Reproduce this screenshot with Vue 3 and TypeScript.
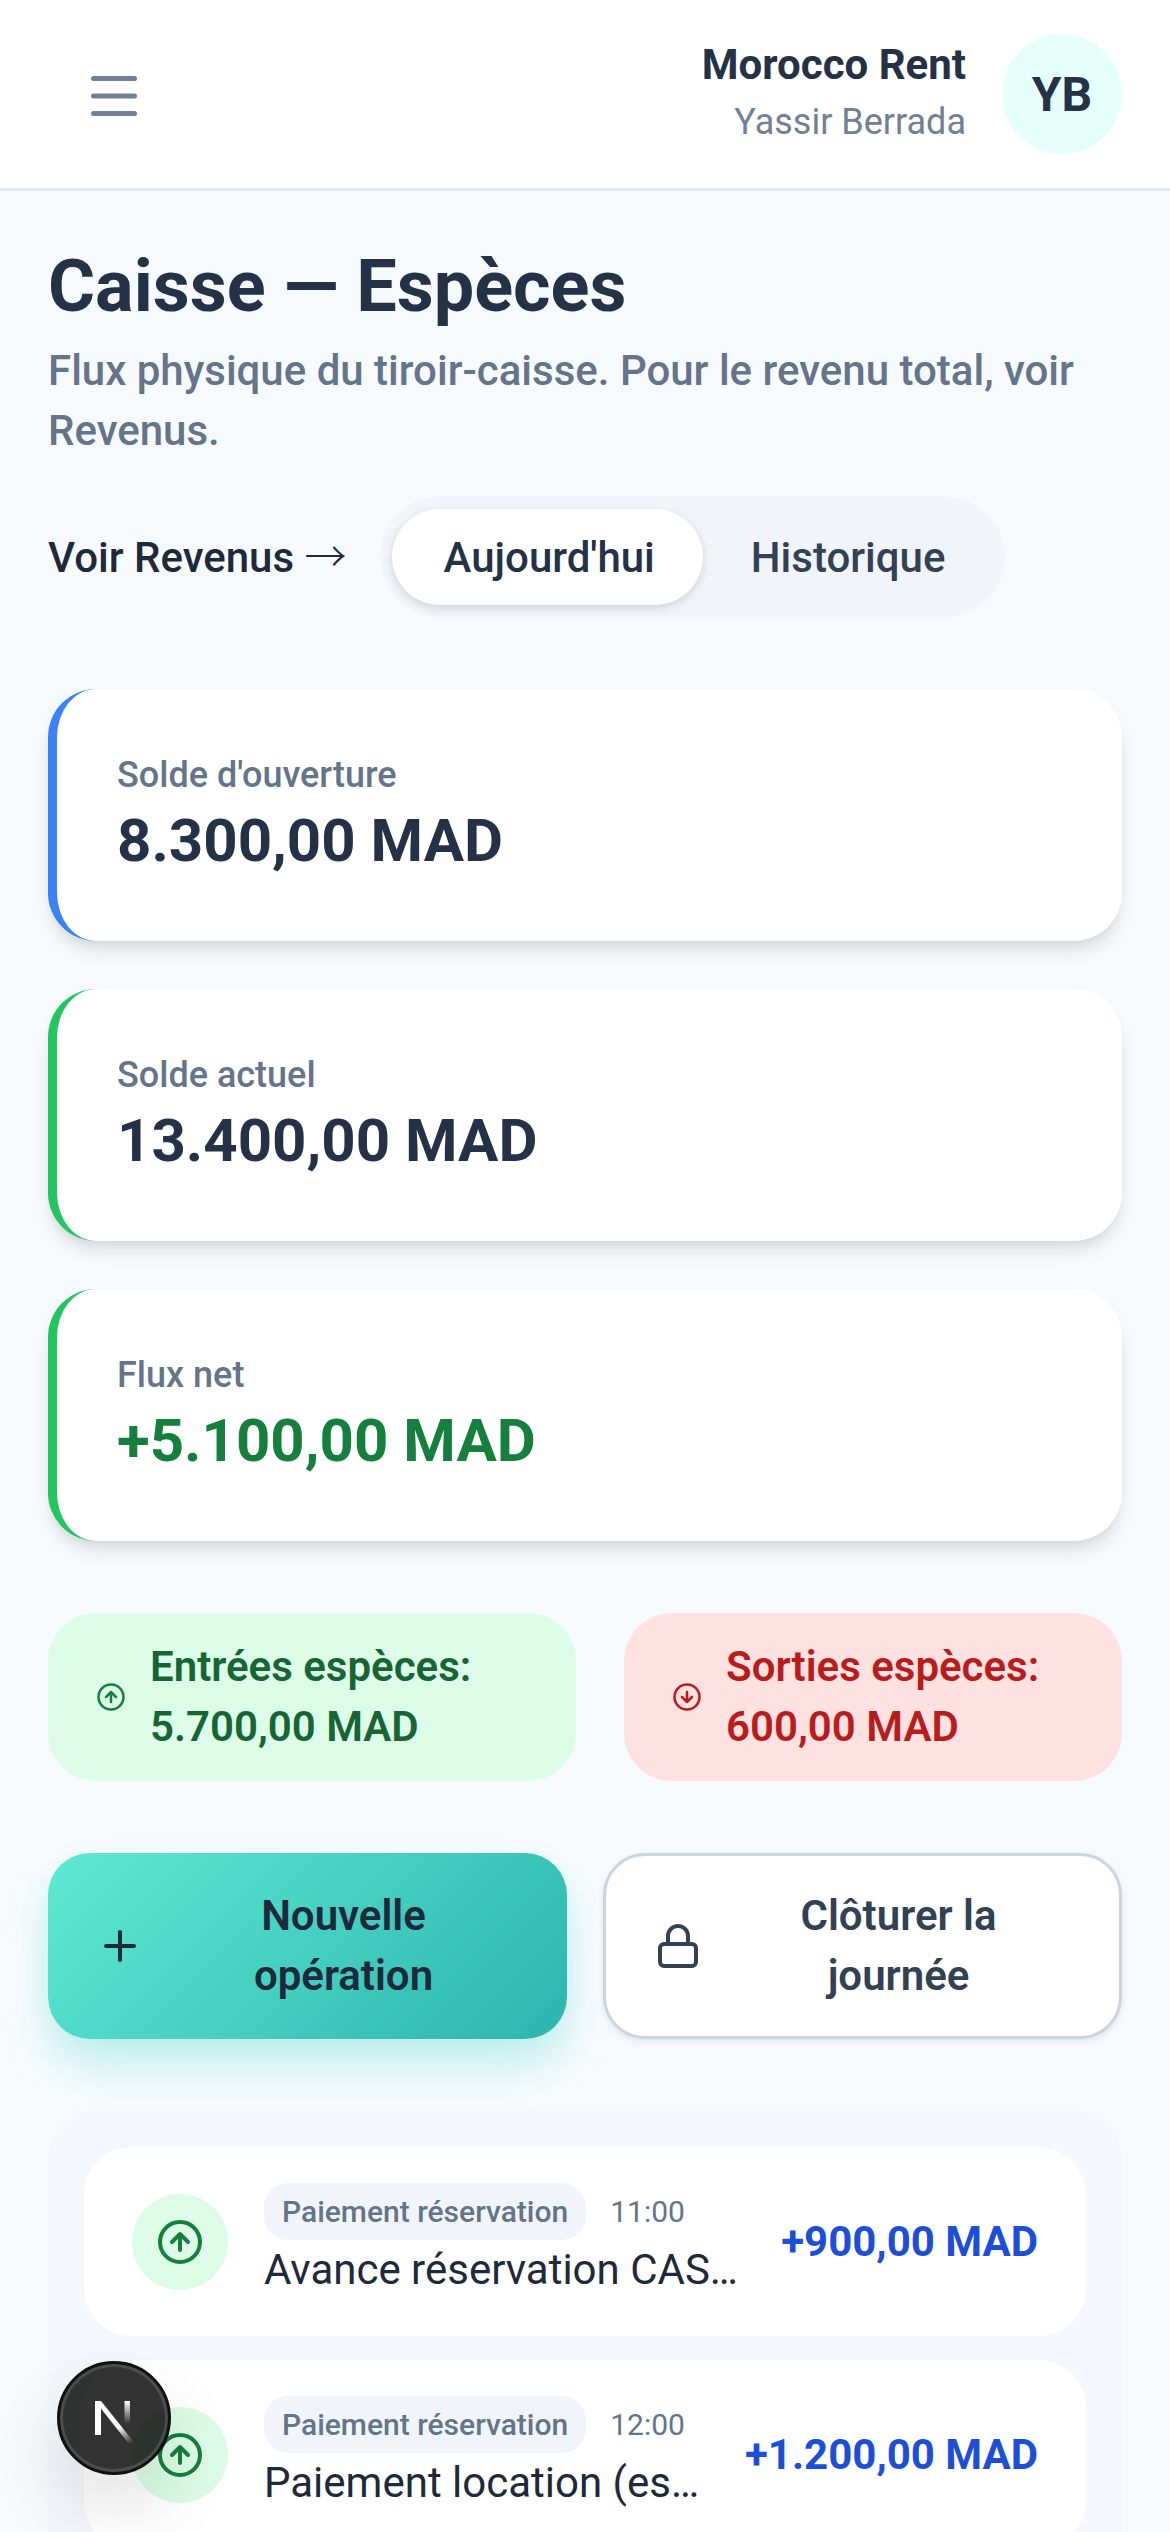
<script setup lang="ts">
interface Op {
  tag: string
  time: string
  title: string
  amount: string
}
const ops: Op[] = [
  { tag: 'Paiement réservation', time: '11:00', title: 'Avance réservation CAS…', amount: '+900,00 MAD' },
  { tag: 'Paiement réservation', time: '12:00', title: 'Paiement location (es…', amount: '+1.200,00 MAD' },
]
</script>

<template>
  <div class="page">
    <header class="topbar">
      <button class="menu" aria-label="Menu">
        <svg viewBox="0 0 46 40" width="46" height="40" fill="none" stroke="#718096" stroke-width="5" stroke-linecap="round">
          <path d="M2.5 2.5h41M2.5 20h41M2.5 37.5h41" />
        </svg>
      </button>
      <div class="account">
        <div class="who">
          <div class="company">Morocco Rent</div>
          <div class="user">Yassir Berrada</div>
        </div>
        <div class="avatar">YB</div>
      </div>
    </header>

    <main class="main">
      <section class="head">
        <h1>Caisse — Espèces</h1>
        <p class="sub">Flux physique du tiroir-caisse. Pour le revenu total, voir Revenus.</p>
        <div class="tabs-row">
          <a class="link">Voir Revenus <span class="arrow">→</span></a>
          <div class="tabs">
            <span class="tab active">Aujourd'hui</span>
            <span class="tab">Historique</span>
          </div>
        </div>
      </section>

      <section class="cards">
        <div class="card blue">
          <div class="label">Solde d'ouverture</div>
          <div class="value">8.300,00 MAD</div>
        </div>
        <div class="card green">
          <div class="label">Solde actuel</div>
          <div class="value">13.400,00 MAD</div>
        </div>
        <div class="card green">
          <div class="label">Flux net</div>
          <div class="value pos">+5.100,00 MAD</div>
        </div>
      </section>

      <section class="pills">
        <div class="pill in">
          <svg class="pill-ico" viewBox="0 0 24 24" fill="none" stroke="#15803d" stroke-width="2" stroke-linecap="round" stroke-linejoin="round">
            <circle cx="12" cy="12" r="10" /><path d="m16 12-4-4-4 4M12 16V8" />
          </svg>
          <span>Entrées espèces: 5.700,00 MAD</span>
        </div>
        <div class="pill out">
          <svg class="pill-ico" viewBox="0 0 24 24" fill="none" stroke="#b91c1c" stroke-width="2" stroke-linecap="round" stroke-linejoin="round">
            <circle cx="12" cy="12" r="10" /><path d="M12 8v8M8 12l4 4 4-4" />
          </svg>
          <span>Sorties espèces: 600,00 MAD</span>
        </div>
      </section>

      <section class="actions">
        <button class="btn primary">
          <svg class="btn-ico" viewBox="0 0 24 24" fill="none" stroke="#1e293b" stroke-width="2" stroke-linecap="round" stroke-linejoin="round">
            <path d="M5 12h14M12 5v14" />
          </svg>
          <span class="btn-text">Nouvelle opération</span>
        </button>
        <button class="btn ghost">
          <svg class="btn-ico" viewBox="0 0 24 24" fill="none" stroke="#334155" stroke-width="2" stroke-linecap="round" stroke-linejoin="round">
            <rect x="3" y="11" width="18" height="11" rx="2" /><path d="M7 11V7a5 5 0 0 1 10 0v4" />
          </svg>
          <span class="btn-text">Clôturer la journée</span>
        </button>
      </section>

      <section class="list">
        <article v-for="op in ops" :key="op.time" class="item">
          <div class="item-ico">
            <svg viewBox="0 0 24 24" width="48" height="48" fill="none" stroke="#15803d" stroke-width="2" stroke-linecap="round" stroke-linejoin="round">
              <circle cx="12" cy="12" r="10" /><path d="m16 12-4-4-4 4M12 16V8" />
            </svg>
          </div>
          <div class="item-body">
            <div class="item-meta">
              <span class="tag">{{ op.tag }}</span>
              <span class="time">{{ op.time }}</span>
            </div>
            <div class="item-title">{{ op.title }}</div>
          </div>
          <div class="amount">{{ op.amount }}</div>
        </article>
      </section>
    </main>

    <div class="dev-badge">
      <svg viewBox="0 0 60 60" width="60" height="60">
        <defs>
          <linearGradient id="nA" x1="26" y1="20" x2="48" y2="55" gradientUnits="userSpaceOnUse">
            <stop offset="0.5" stop-color="#fff" />
            <stop offset="1" stop-color="#fff" stop-opacity="0" />
          </linearGradient>
          <linearGradient id="nB" x1="43" y1="13" x2="43" y2="36" gradientUnits="userSpaceOnUse">
            <stop offset="0" stop-color="#fff" />
            <stop offset="1" stop-color="#fff" stop-opacity="0" />
          </linearGradient>
        </defs>
        <path d="M11 13h6v34h-6z" fill="#fff" />
        <path d="M11 13h6l32 40-4 3z" fill="url(#nA)" />
        <path d="M40.5 13h5.5v28h-5.5z" fill="url(#nB)" />
      </svg>
    </div>
  </div>
</template>

<style>
html, body {
  margin: 0;
  background: #f7fafd;
}
</style>

<style scoped>
* { box-sizing: border-box; }
.page {
  position: relative;
  width: 1170px;
  height: 2532px;
  overflow: hidden;
  background: #f7fafd;
  font-family: Roboto, "Noto Sans", sans-serif;
  color: #1e293b;
}
.topbar {
  height: 191px;
  background: #fff;
  border-bottom: 3px solid #e2e8f0;
  display: flex;
  align-items: center;
  justify-content: space-between;
  padding: 0 48px 0 91px;
}
.menu {
  border: 0;
  padding: 0;
  margin-top: 3px;
  background: none;
  display: flex;
}
.account { display: flex; align-items: center; gap: 36px; }
.who { text-align: right; padding-bottom: 4px; }
.company { font-size: 42px; line-height: 60px; font-weight: 700; color: #243147; }
.user { font-size: 36px; line-height: 54px; color: #718096; }
.avatar {
  width: 120px;
  height: 120px;
  border-radius: 50%;
  background: #e6fffa;
  display: flex;
  align-items: center;
  justify-content: center;
  font-size: 48px;
  font-weight: 700;
  color: #243147;
}
.main {
  padding: 48px 48px 0;
  display: flex;
  flex-direction: column;
  gap: 72px;
}
h1 {
  margin: 0;
  font-size: 72px;
  line-height: 96px;
  font-weight: 700;
  color: #243147;
}
.sub {
  margin: 6px 0 0;
  font-size: 42px;
  line-height: 60px;
  font-weight: 500;
  color: #64748b;
}
.tabs-row {
  margin-top: 36px;
  display: flex;
  align-items: center;
  gap: 33px;
}
.link { font-size: 42px; line-height: 60px; font-weight: 500; color: #1e293b; padding-bottom: 3px; }
.arrow { font-family: "Noto Sans CJK JP", sans-serif; font-weight: 300; }
.tabs {
  display: flex;
  padding: 12px;
  height: 120px;
  border-radius: 60px;
  background: #f1f5f9;
}
.tab {
  padding: 0 48px;
  display: flex;
  align-items: center;
  border-radius: 48px;
  font-size: 42px;
  font-weight: 500;
  color: #334155;
}
.tab.active {
  padding-left: 52px;
  background: #fff;
  color: #243147;
  box-shadow: 0 3px 9px rgba(0, 0, 0, 0.14);
}
.cards { display: flex; flex-direction: column; gap: 48px; }
.card {
  background: #fff;
  border-radius: 48px;
  border-left: 9px solid;
  padding: 60px;
  box-shadow: 0 12px 18px -3px rgba(0, 0, 0, 0.1), 0 6px 12px -6px rgba(0, 0, 0, 0.1);
}
.card.blue { border-left-color: #3b82f6; }
.card.green { border-left-color: #22c55e; }
.label { font-size: 36px; line-height: 52px; font-weight: 500; color: #64748b; }
.value { font-size: 60px; line-height: 80px; font-weight: 700; color: #243147; }
.value.pos { color: #15803d; }
.pills {
  display: grid;
  grid-template-columns: 528fr 498fr;
  gap: 48px;
}
.pill {
  display: flex;
  align-items: center;
  gap: 24px;
  padding: 24px 48px;
  border-radius: 48px;
  font-size: 42px;
  line-height: 60px;
  font-weight: 600;
}
.pill.in { background: #dcfce7; color: #166534; }
.pill.out { background: #fee2e2; color: #b91c1c; }
.pill-ico { width: 30px; height: 30px; flex: none; }
.actions {
  display: grid;
  grid-template-columns: 1fr 1fr;
  gap: 36px;
}
.btn {
  display: flex;
  align-items: center;
  gap: 24px;
  padding: 30px 48px;
  border: 3px solid transparent;
  border-radius: 42px;
  font-family: inherit;
  font-size: 42px;
  line-height: 60px;
  font-weight: 600;
}
.btn-ico { width: 48px; height: 48px; flex: none; }
.btn-text { flex: 1; text-align: center; }
.btn.primary {
  border: 0;
  padding: 33px 48px;
  background: linear-gradient(135deg, #5eead4, #2bb5ad);
  color: #1e293b;
  box-shadow: 0 30px 48px -6px rgba(45, 212, 191, 0.25), 0 12px 36px -6px rgba(45, 212, 191, 0.12);
}
.btn.ghost {
  background: #fff;
  border-color: #cbd5e1;
  color: #334155;
  box-shadow: 0 3px 6px rgba(0, 0, 0, 0.08);
}
.list {
  padding: 36px;
  border-radius: 48px;
  background: #f4f7fb;
  display: flex;
  flex-direction: column;
  gap: 24px;
}
.item {
  display: flex;
  align-items: center;
  gap: 36px;
  padding: 36px 48px;
  border-radius: 48px;
  background: #fff;
}
.item-ico {
  width: 96px;
  height: 96px;
  flex: none;
  border-radius: 50%;
  background: #dcfce7;
  display: flex;
  align-items: center;
  justify-content: center;
}
.item-body { flex: 1; min-width: 0; }
.item-meta { display: flex; align-items: center; gap: 24px; }
.tag {
  padding: 6px 18px;
  border-radius: 24px;
  background: #f1f5f9;
  font-size: 30px;
  line-height: 45px;
  font-weight: 500;
  color: #64748b;
  white-space: nowrap;
}
.time { font-size: 30px; line-height: 45px; color: #64748b; }
.item-title {
  font-size: 42px;
  line-height: 60px;
  color: #1e293b;
  white-space: nowrap;
}
.amount {
  flex: none;
  font-size: 42px;
  line-height: 60px;
  font-weight: 700;
  color: #1d4ed8;
}
.dev-badge {
  position: absolute;
  left: 57px;
  top: 2361px;
  width: 114px;
  height: 114px;
  border-radius: 50%;
  background: rgba(0, 0, 0, 0.8);
  border: 3px solid #111;
  box-shadow: inset 0 0 0 3px rgba(255, 255, 255, 0.13), 0 36px 72px rgba(0, 0, 0, 0.12);
  display: flex;
  align-items: center;
  justify-content: center;
}
</style>
